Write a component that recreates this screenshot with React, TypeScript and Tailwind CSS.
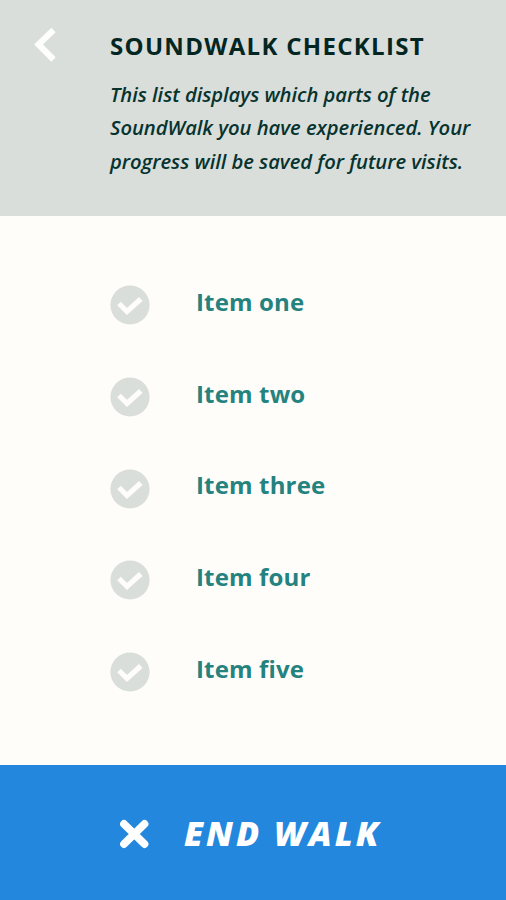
const items = ['Item one', 'Item two', 'Item three', 'Item four', 'Item five'];

function BackIcon() {
  return (
    <svg className="h-[36px] w-[24px]" viewBox="0 0 24 36" fill="none">
      <path d="M20.5 3 5.5 17.5l15 15" stroke="#fdfefd" strokeWidth="6.2" />
    </svg>
  );
}

function CheckIcon() {
  return (
    <svg className="size-[40px] shrink-0" viewBox="0 0 40 40" fill="none">
      <circle cx="20" cy="20" r="19.6" fill="#d9dedb" />
      <path d="m9 18.5 8 8L30.8 14" stroke="#fffdfa" strokeWidth="5.2" />
    </svg>
  );
}

function CloseIcon() {
  return (
    <svg className="size-[30px] shrink-0" viewBox="0 0 30 30" fill="none">
      <path d="m5 5 20.5 20M25.5 5 5 25" stroke="#ffffff" strokeWidth="7.8" strokeLinecap="round" />
    </svg>
  );
}

export default function App() {
  return (
    <div className="flex h-[900px] w-[506px] flex-col overflow-hidden bg-[#fffdfa] font-['Open_Sans',sans-serif]">
      {/* Header */}
      <header className="flex h-[216px] shrink-0 bg-[#d9dedb]">
        <button aria-label="Back" className="mt-[27px] ml-[33px] flex h-9 w-[77px] shrink-0">
          <BackIcon />
        </button>
        <div className="pt-[29px]">
          <h1 className="text-[24px] leading-[34px] font-bold tracking-[1.3px] whitespace-nowrap text-[#042623]">
            SOUNDWALK CHECKLIST
          </h1>
          <p className="mt-[14.5px] text-[20.2px] leading-[33.5px] font-semibold tracking-[-0.03px] whitespace-nowrap text-[#07332f] italic">
            This list displays which parts of the
            <br />
            SoundWalk you have experienced. Your
            <br />
            progress will be saved for future visits.
          </p>
        </div>
      </header>

      {/* Checklist */}
      <ul className="flex flex-1 flex-col gap-[51.8px] pt-[69px] pl-[110px]">
        {items.map((item) => (
          <li key={item} className="flex h-[40px] items-center">
            <CheckIcon />
            <span className="-mt-[6.5px] ml-[46px] text-[24px] leading-[34px] font-bold tracking-[0.15px] whitespace-nowrap text-[#24827f]">
              {item}
            </span>
          </li>
        ))}
      </ul>

      {/* End walk */}
      <button className="flex h-[135px] shrink-0 items-center bg-[#2387de] pt-[3px] pl-[119px] text-white">
        <CloseIcon />
        <span className="-mt-[3px] ml-[35px] text-[34px] leading-[44px] font-extrabold tracking-[3px] whitespace-nowrap italic">
          END WALK
        </span>
      </button>
    </div>
  );
}
